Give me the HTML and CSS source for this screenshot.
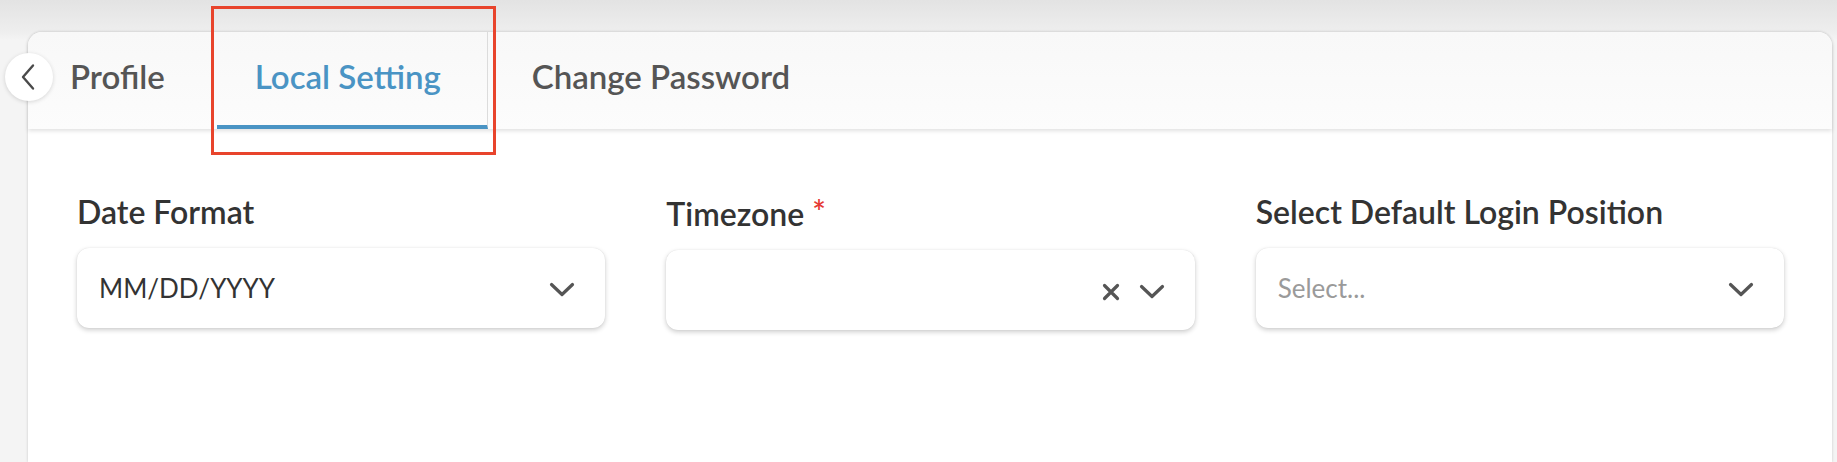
FILE: index.html
```html
<!DOCTYPE html>
<html>
<head>
<meta charset="utf-8">
<link rel="stylesheet" href="styles.css">
</head>
<body>
<div class="page">
  <div class="card">
    <div class="tabs">
      <button class="back" aria-label="Back">
        <svg width="16" height="28" viewBox="0 0 16 28"><path d="M13 2.5 L3 14 L13 25.5" fill="none" stroke="#4a4a4a" stroke-width="2.4" stroke-linecap="round" stroke-linejoin="round"/></svg>
      </button>
      <div class="tab">Profile</div>
      <div class="tab active">Local Setting</div>
      <div class="tab">Change Password</div>
    </div>
    <div class="content">
      <div class="field">
        <div class="label">Date Format</div>
        <div class="select">
          <span class="value">MM/DD/YYYY</span>
          <span class="icons">
            <svg class="chev" width="26" height="15" viewBox="0 0 26 15"><path d="M2.5 2.5 L13 12.5 L23.5 2.5" fill="none" stroke="#555" stroke-width="3.2" stroke-linecap="round" stroke-linejoin="round"/></svg>
          </span>
        </div>
      </div>
      <div class="field">
        <div class="label">Timezone <span class="req">*</span></div>
        <div class="select">
          <span class="value"></span>
          <span class="icons">
            <svg class="clear" width="18" height="18" viewBox="0 0 18 18"><path d="M2.5 2.5 L15.5 15.5 M15.5 2.5 L2.5 15.5" fill="none" stroke="#555" stroke-width="3.2" stroke-linecap="round"/></svg>
            <svg class="chev" width="26" height="15" viewBox="0 0 26 15"><path d="M2.5 2.5 L13 12.5 L23.5 2.5" fill="none" stroke="#555" stroke-width="3.2" stroke-linecap="round" stroke-linejoin="round"/></svg>
          </span>
        </div>
      </div>
      <div class="field">
        <div class="label">Select Default Login Position</div>
        <div class="select">
          <span class="value placeholder">Select...</span>
          <span class="icons">
            <svg class="chev" width="26" height="15" viewBox="0 0 26 15"><path d="M2.5 2.5 L13 12.5 L23.5 2.5" fill="none" stroke="#555" stroke-width="3.2" stroke-linecap="round" stroke-linejoin="round"/></svg>
          </span>
        </div>
      </div>
    </div>
  </div>
  <div class="annotation"></div>
</div>
</body>
</html>
```

FILE: styles.css
```css
* { box-sizing: border-box; }
html, body { margin: 0; height: 100%; }
body {
  background: linear-gradient(#e3e3e3 0, #eeeeee 32px, #f4f4f4 40px);
  font-family: "Lato", "Liberation Sans", sans-serif;
  overflow: hidden;
}
.page {
  position: relative;
  height: 462px;
  padding: 32px 5px 0 28px;
}
.card {
  height: 100%;
  background: #fff;
  border-radius: 14px 14px 0 0;
  box-shadow: 0 0 3px rgba(0,0,0,0.18);
}
.tabs {
  position: relative;
  height: 97px;
  display: flex;
  align-items: stretch;
  padding-left: 4px;
  background: linear-gradient(#f8f8f8, #fcfcfc);
  border-radius: 14px 14px 0 0;
  box-shadow: 0 2px 4px rgba(0,0,0,0.12);
}
.back {
  position: absolute;
  left: -23px;
  top: 21px;
  width: 48px;
  height: 48px;
  border: none;
  border-radius: 50%;
  background: #fff;
  box-shadow: 0 1px 4px rgba(0,0,0,0.15);
  display: flex;
  align-items: center;
  justify-content: center;
  padding: 0 2px 0 0;
}
.tab {
  display: flex;
  align-items: center;
  padding: 0 46px 6px 38px;
  margin-right: 6px;
  border-bottom: 4px solid transparent;
  font-size: 33px;
  font-weight: 600;
  color: #555;
}
.tab.active {
  color: #4a94c4;
  border-bottom-color: #4a94c4;
  border-right: 1px solid #dcdcdc;
}
.content {
  display: grid;
  grid-template-columns: repeat(3, 1fr);
  column-gap: 61px;
  padding: 64px 48px 0 49px;
}
.label {
  font-size: 32px;
  line-height: 38px;
  font-weight: 600;
  color: #333;
  margin-bottom: 17px;
}
.req { color: #e53935; font-size: 32px; vertical-align: 2px; }
.select {
  height: 80px;
  border-radius: 12px;
  background: #fff;
  box-shadow: 0 2px 5px rgba(0,0,0,0.2), 0 0 1px rgba(0,0,0,0.12);
  display: flex;
  align-items: center;
  justify-content: space-between;
  padding: 0 30px 0 22px;
}
.value {
  font-size: 26px;
  color: #333;
}
.value.placeholder { color: #9a9a9a; }
.icons {
  display: flex;
  align-items: center;
  gap: 19px;
}
.chev { display: block; margin-top: 3px; }
.clear { display: block; margin-top: 3px; }
.annotation {
  position: absolute;
  left: 211px;
  top: 6px;
  width: 285px;
  height: 149px;
  border: 3.5px solid #e8442c;
  pointer-events: none;
}
```
